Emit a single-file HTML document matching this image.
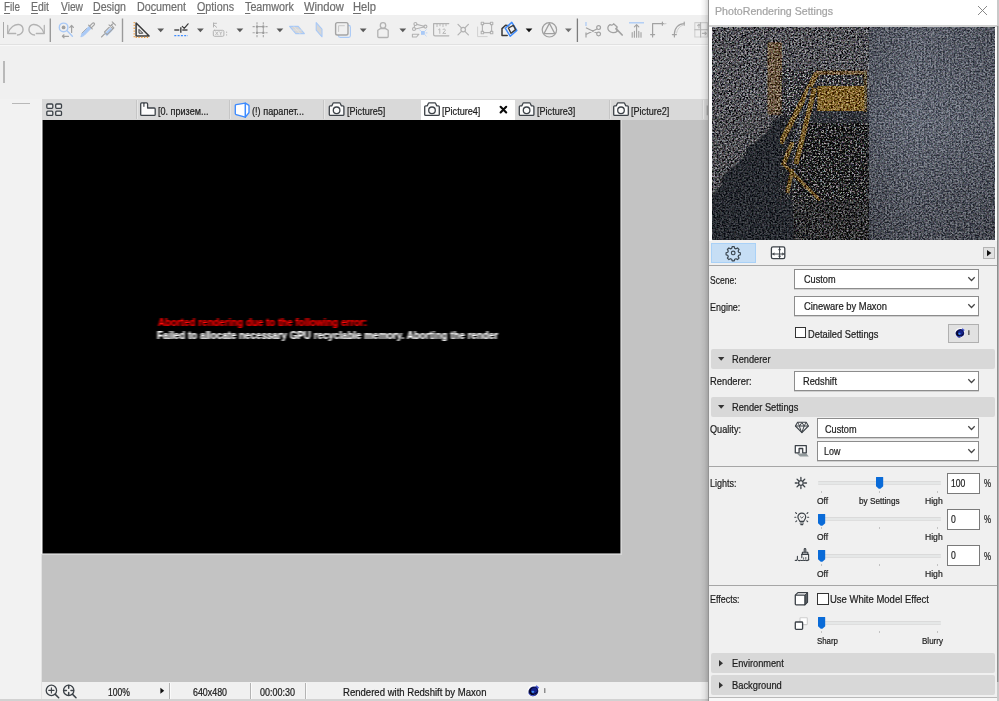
<!DOCTYPE html>
<html>
<head>
<meta charset="utf-8">
<title>PhotoRendering Settings</title>
<style>
html,body{margin:0;padding:0;}
body{width:999px;height:701px;overflow:hidden;background:#f0f0f0;position:relative;font-family:"Liberation Sans",sans-serif;font-size:11px;color:#1a1a1a;}
.a{position:absolute;}
.t{position:absolute;white-space:nowrap;line-height:14px;transform-origin:0 0;-webkit-text-stroke:0.22px currentColor;}
.t u{text-decoration:underline;text-underline-offset:1.5px;text-decoration-thickness:1px;}
svg{position:absolute;overflow:visible;}
.dd{position:absolute;background:#fff;border:1px solid #8c8c8c;box-sizing:border-box;height:20px;box-shadow:0 1px 0 #cfcfcf;}
.hdr{position:absolute;left:711px;width:284px;height:20px;background:#d8d8d8;border-radius:2px;}
.num{position:absolute;left:947px;background:#fff;border:1px solid #7a7a7a;box-sizing:border-box;width:33px;height:21px;}
.track{position:absolute;left:818px;width:123px;height:4px;background:#e5e7e7;border-top:1px solid #dadada;border-bottom:1px solid #dedede;box-sizing:border-box;border-radius:1px;}
.tick{position:absolute;width:1px;height:2px;background:#c2c2c2;}
.cb{position:absolute;width:11px;height:11px;border:1px solid #333;background:#fff;box-sizing:border-box;}
.vs{position:absolute;width:1px;background:#9c9c9c;}
</style>
</head>

<body>
<div class="a" style="left:0;top:0;width:708px;height:15px;background:#fff;"></div>
<span class="t" style="left:4.0px;top:-0.16px;font-size:12px;color:#6e6e6e;font-weight:normal;transform:scaleX(0.8265);"><u>F</u>ile</span>
<span class="t" style="left:31.0px;top:-0.16px;font-size:12px;color:#6e6e6e;font-weight:normal;transform:scaleX(0.8694);"><u>E</u>dit</span>
<span class="t" style="left:60.7px;top:-0.16px;font-size:12px;color:#6e6e6e;font-weight:normal;transform:scaleX(0.8523);"><u>V</u>iew</span>
<span class="t" style="left:93.0px;top:-0.16px;font-size:12px;color:#6e6e6e;font-weight:normal;transform:scaleX(0.8833);"><u>D</u>esign</span>
<span class="t" style="left:137.0px;top:-0.16px;font-size:12px;color:#6e6e6e;font-weight:normal;transform:scaleX(0.8957);">Do<u>c</u>ument</span>
<span class="t" style="left:196.7px;top:-0.16px;font-size:12px;color:#6e6e6e;font-weight:normal;transform:scaleX(0.8943);"><u>O</u>ptions</span>
<span class="t" style="left:244.7px;top:-0.16px;font-size:12px;color:#6e6e6e;font-weight:normal;transform:scaleX(0.8960);"><u>T</u>eamwork</span>
<span class="t" style="left:303.7px;top:-0.16px;font-size:12px;color:#6e6e6e;font-weight:normal;transform:scaleX(0.9370);"><u>W</u>indow</span>
<span class="t" style="left:353.0px;top:-0.16px;font-size:12px;color:#6e6e6e;font-weight:normal;transform:scaleX(0.9316);"><u>H</u>elp</span>
<div class="a" style="left:0;top:44px;width:708px;height:1px;background:#e1e1e1;"></div>
<div class="a" style="left:0;top:45px;width:708px;height:1px;background:#f8f8f8;"></div>
<svg style="left:0;top:0" width="708" height="50" viewBox="0 0 708 50" fill="none" stroke-linecap="round" stroke-linejoin="round">
<path d="M3.5 22v16" stroke="#a8a8a8" stroke-width="1" stroke-linecap="butt"/>
<!-- undo / redo -->
<g stroke="#b2b2b2" stroke-width="1.3">
<path d="M7.7 25.5v8h8"/><path d="M8 33.2C10 27.500 14.600 24.200 18.600 24.500C23.400 25 24.400 31 21.200 33.600C20.200 34.500 18.800 35 17.400 35"/>
<path d="M44.3 25.5v8h-8"/><path d="M44 33.2C42 27.500 37.400 24.200 33.400 24.500C28.600 25 27.600 31 30.800 33.600C31.800 34.500 33.200 35 34.600 35"/>
</g>
<path d="M50.3 18.5v23.5" stroke="#9a9a9a" stroke-width="1.4" stroke-linecap="butt"/>
<!-- find & select -->
<circle cx="63.6" cy="27.4" r="4.3" stroke="#a9c9f6" stroke-width="1.4"/>
<circle cx="63.6" cy="27.4" r="1.9" fill="#a0a0a0"/>
<path d="M66.8 30.6l5.6 5.6" stroke="#a9c9f6" stroke-width="1.4"/>
<path d="M71.6 26v6.5M69.8 27.3l1.8-1.8l1.8 1.8" stroke="#a2a2a2" stroke-width="1.2"/>
<path d="M62.5 36.3h6M64 34.8l-1.6 1.5l1.6 1.5" stroke="#a2a2a2" stroke-width="1.2"/>
<!-- eyedropper -->
<path d="M81 36.5l1.2-3.2l7.2-7.2l2 2l-7.2 7.2z" fill="#a9c9f6" stroke="#a9c9f6" stroke-width="1"/>
<path d="M88.6 25.2l3.6 3.6M89.6 26.2l3-3c1-1 2.6 0.6 1.6 1.6l-3 3" stroke="#a2a2a2" stroke-width="1.2"/>
<path d="M86.5 28.5l-4.5 4.5" stroke="#a2a2a2" stroke-width="0.8"/>
<!-- syringe -->
<path d="M105 33.5l5.5-5.5l2 2l-5.5 5.5z" fill="#a9c9f6" stroke="#a9c9f6" stroke-width="0.8"/>
<path d="M101.5 37l3-3M104.5 32l6.8-6.8l2.6 2.6l-6.8 6.8zM111 25.5l2.5-2.5M112.2 21.8l3.4 3.4M109 24.8l4 4" stroke="#a2a2a2" stroke-width="1.1"/>
<path d="M122.5 18.5v23.5" stroke="#9a9a9a" stroke-width="1.4" stroke-linecap="butt"/>
<!-- set square -->
<path d="M136.100 23v13h13z" stroke="#3a3a3a" stroke-width="1.5"/>
<path d="M139 29.800v3.400h3.400z" stroke="#3a3a3a" stroke-width="1"/>
<path d="M134.2 22v15.4h15.4" stroke="#f39a35" stroke-width="1.2" stroke-dasharray="1.3 1.5" stroke-linecap="butt"/>
<path d="M157.3 28.4h6.8l-3.4 3.8z" fill="#5a5a5a"/>
<!-- snap -->
<path d="M174.3 30h5M182.3 30h5.2" stroke="#4a4a4a" stroke-width="1.3" stroke-linecap="butt"/>
<path d="M180.8 27.3v5.4" stroke="#4a4a4a" stroke-width="1.5" stroke-linecap="butt"/>
<path d="M182.3 26.4l1.9 2l3.9-4.6" stroke="#3a3a3a" stroke-width="1.2"/>
<path d="M174.3 35.6h13.6" stroke="#3d8bff" stroke-width="1.1" stroke-dasharray="2 1.3" stroke-linecap="butt"/>
<path d="M197 28.4h6.8l-3.4 3.8z" fill="#5a5a5a"/>
<!-- XY -->
<g stroke="#b2b2b2" stroke-width="1">
<rect x="213.3" y="30.3" width="10.6" height="6" rx="1.2"/>
<path d="M213.5 23v4M213.5 23.3h3M214 25l2.6 2.3"/>
<path d="M215.6 31.8l2.4 3M218 31.8l-2.4 3M219.6 31.8l1.1 1.5l1.1-1.5M220.7 33.3v1.6" stroke-width="0.8"/>
<path d="M226.6 32v0.2M226.6 34.8v0.2" stroke-width="1.2"/>
</g>
<path d="M236.5 28.4h6.8l-3.4 3.8z" fill="#5a5a5a"/>
<!-- grid -->
<g stroke="#a6a6a6" stroke-width="1.1" stroke-linecap="butt">
<path d="M257 22.2v15M263.3 22.2v15M252.6 26.6h15M252.6 32.8h15" stroke-dasharray="2.2 1 8.6 1 2.2 0"/>
<rect x="256" y="25.6" width="2" height="2" fill="#9a9a9a" stroke="none"/><rect x="262.3" y="25.6" width="2" height="2" fill="#9a9a9a" stroke="none"/>
<rect x="256" y="31.8" width="2" height="2" fill="#9a9a9a" stroke="none"/><rect x="262.3" y="31.8" width="2" height="2" fill="#9a9a9a" stroke="none"/>
</g>
<path d="M276.5 28.4h6.8l-3.4 3.8z" fill="#5a5a5a"/>
<!-- planes -->
<path d="M289.6 26.4h8.6l6.2 7.2h-8.6z" fill="#d6d6d6" stroke="#a9c9f6" stroke-width="1.1"/>
<path d="M293.5 30h8.5M294 26.6l6 7" stroke="#e6e6e6" stroke-width="0.7"/>
<path d="M316.2 22.6l5.8 6.6v7.6l-5.8-6.6z" fill="#d6d6d6" stroke="#a9c9f6" stroke-width="1.1"/>
<!-- rect -->
<rect x="338.4" y="25.4" width="12" height="12" rx="1.8" stroke="#a9c9f6" stroke-width="1.1"/>
<rect x="335.6" y="22.6" width="12.4" height="12.4" rx="1.8" fill="#f0f0f0" stroke="#a4a4a4" stroke-width="1.4"/>
<path d="M338.6 31.5v-5.8h5.8" stroke="#c4c4c4" stroke-width="0.9"/>
<path d="M359.8 28.4h6.8l-3.4 3.8z" fill="#5a5a5a"/>
<!-- weight -->
<g stroke="#b2b2b2" stroke-width="1.3">
<circle cx="383" cy="25.4" r="2.7"/>
<path d="M380.4 28.6h5.2l2.6 1.6v6.3c0 0.6-0.4 1-1 1h-8.4c-0.6 0-1-0.4-1-1v-6.3z"/>
</g>
<path d="M399.4 28.4h6.8l-3.4 3.8z" fill="#5a5a5a"/>
<!-- nodes -->
<g stroke="#b2b2b2" stroke-width="1.1">
<circle cx="415.4" cy="24" r="1.5"/><circle cx="425.4" cy="26.6" r="1.5"/><circle cx="414" cy="29" r="1.5"/>
<path d="M416.8 24.4l7.2 1.8M415.4 29l8.6-2M414.6 25.4l-0.4 2.2"/>
<path d="M412.4 34.2h6.5l-2.4 2.8h-4.1z" />
</g>
<rect x="421" y="31" width="3.8" height="3.8" fill="#a9c9f6"/>
<path d="M419.6 29.8l0.8 0.8M426.2 29.8l-0.8 0.8M426.2 36l-0.8-0.8M427 32.9h-1" stroke="#a9c9f6" stroke-width="0.8"/>
<!-- ruler -->
<g stroke="#b2b2b2" stroke-width="1.2">
<path d="M433.6 24v10.4c0 0.8 0.6 1.4 1.4 1.4h13.8M433.6 23.6h15.2"/>
<path d="M437 24v2.6M440 24v1.8M443 24v2.6M446 24v1.8" stroke-width="0.9"/>
<path d="M438.6 29.6l1.2-0.8v4.6M442.8 29.6c0.8-1.2 3-0.6 2.4 1c-0.4 1-2 1.6-2.4 2.8h2.8" stroke-width="0.9"/>
</g>
<!-- x icon -->
<g stroke="#b2b2b2" stroke-width="1.2"><path d="M458 24.4l10.4 10.4M468.4 24.4l-10.4 10.4"/><circle cx="463.2" cy="29.6" r="2.3" fill="#f0f0f0"/></g>
<!-- group -->
<g stroke="#b2b2b2" stroke-width="1.1">
<rect x="482.4" y="23.4" width="9.2" height="9.2"/>
<rect x="481.2" y="22.2" width="2.4" height="2.4" fill="#f0f0f0"/><rect x="490.4" y="22.2" width="2.4" height="2.4" fill="#f0f0f0"/>
<rect x="481.2" y="31.4" width="2.4" height="2.4" fill="#f0f0f0"/><rect x="490.4" y="31.4" width="2.4" height="2.4" fill="#f0f0f0"/>
</g>
<path d="M477.6 27v9.6h9.6" stroke="#d0d0d0" stroke-width="1"/>
<!-- trace (active) -->
<path d="M502 35.6v-7l3.6-3.4l3 0.6M502 35.6h5.2" stroke="#3a3a3a" stroke-width="1.5"/>
<path d="M511.8 22.4l5 8l-6.6 5.8l-5-8z" stroke="#3d8bff" stroke-width="1.5"/>
<path d="M508.4 28l5-2.6l2.2 4.2l-4.6 3.6z" stroke="#3a3a3a" stroke-width="1.4"/>
<path d="M525.6 28.4h6.8l-3.4 3.8z" fill="#111"/>
<!-- circle triangle -->
<g stroke="#a0a0a0" stroke-width="1.2"><circle cx="549.4" cy="29.8" r="7.2"/><path d="M549.4 23.4l5.4 10.2h-10.8z"/></g>
<path d="M565 28.4h6.8l-3.4 3.8z" fill="#707070"/>
<path d="M577.4 18.5v23.5" stroke="#7c7c7c" stroke-width="1.3" stroke-linecap="butt"/>
<!-- scissors -->
<path d="M586 22v4" stroke="#a9c9f6" stroke-width="1.2" stroke-linecap="butt"/>
<g stroke="#a2a2a2" stroke-width="1.2"><path d="M586 32.6v5" stroke-linecap="butt"/><path d="M586.4 28l10 4.8M586.4 34.2l10-5"/><circle cx="598.6" cy="27.6" r="1.9"/><circle cx="598.6" cy="34" r="1.9"/></g>
<!-- axe -->
<g stroke="#a2a2a2" stroke-width="1.3"><path d="M610 24.6c1.2 1 2.8 0.6 3.6-0.8l3.6 3.2c-1.2 1.6-1 3 0.2 4c-2.6 2.6-6.6 2-8.6-0.4c-1.6-2-1.2-4.6 1.2-6z"/><path d="M616 28.6l6.2 6.4" stroke-width="1.7"/></g>
<!-- adjust -->
<path d="M629 22.8h15" stroke="#a9c9f6" stroke-width="1.3" stroke-linecap="butt"/>
<g stroke="#a2a2a2" stroke-width="1.1"><path d="M636.6 24.6v12.6M634.4 26.8l2.2-2.2l2.2 2.2M632.2 32.6v4.6M634.4 31.4v5.8M638.8 31.4v5.8M641 32.6v4.6"/></g>
<!-- fillet -->
<g stroke="#a2a2a2" stroke-width="1.2"><path d="M652.6 37v-13.4h11.6M662.4 22v3.2M650.6 34.6h4"/><path d="M664.2 23.6h1.8" stroke="#cfcfcf"/></g>
<!-- curve -->
<g stroke="#a2a2a2" stroke-width="1.2"><path d="M674.4 37v-3c0-6 4-10.4 10-10.4M684.2 22v3.2M672.4 34.6h4"/><path d="M676.6 33c0.6-4 3-7 6.6-8" stroke="#c8c8c8" stroke-width="0.9"/></g>
<!-- resize -->
<g stroke="#cfcfcf" stroke-width="1.1"><rect x="694.8" y="22.6" width="12.6" height="14.4"/><path d="M694.8 29.8h12.6M700.6 22.6v14.4M699 24.4v3.6M697.6 25.6l1.4-1.4l1.4 1.4M702.4 33.4h4M705 32l1.4 1.4l-1.4 1.4" stroke="#b4b4b4"/></g>
</svg>
<div class="a" style="left:3px;top:61px;width:2px;height:22px;background:#b9b9b9;"></div>
<div class="a" style="left:42px;top:99px;width:666px;height:21px;background:#d9d9d9;"></div>
<div class="a" style="left:421px;top:100px;width:94px;height:20px;background:#ffffff;"></div>
<div class="a" style="left:136px;top:100px;width:1px;height:19px;background:#c6c6c6;"></div>
<div class="a" style="left:137px;top:100px;width:1px;height:19px;background:#e6e6e6;"></div>
<div class="a" style="left:229px;top:100px;width:1px;height:19px;background:#c6c6c6;"></div>
<div class="a" style="left:230px;top:100px;width:1px;height:19px;background:#e6e6e6;"></div>
<div class="a" style="left:323px;top:100px;width:1px;height:19px;background:#c6c6c6;"></div>
<div class="a" style="left:324px;top:100px;width:1px;height:19px;background:#e6e6e6;"></div>
<div class="a" style="left:609px;top:100px;width:1px;height:19px;background:#c6c6c6;"></div>
<div class="a" style="left:610px;top:100px;width:1px;height:19px;background:#e6e6e6;"></div>
<span class="t" style="left:158.2px;top:103.59px;font-size:11px;color:#1c1c1c;font-weight:normal;transform:scaleX(0.8241);">[0. призем...</span>
<span class="t" style="left:251.7px;top:103.59px;font-size:11px;color:#1c1c1c;font-weight:normal;transform:scaleX(0.8326);">(!) парапет...</span>
<span class="t" style="left:346.7px;top:103.59px;font-size:11px;color:#1c1c1c;font-weight:normal;transform:scaleX(0.8264);">[Picture5]</span>
<span class="t" style="left:441.9px;top:103.59px;font-size:11px;color:#1c1c1c;font-weight:normal;transform:scaleX(0.8264);">[Picture4]</span>
<span class="t" style="left:536.7px;top:103.59px;font-size:11px;color:#1c1c1c;font-weight:normal;transform:scaleX(0.8264);">[Picture3]</span>
<span class="t" style="left:631.3000000000001px;top:103.59px;font-size:11px;color:#1c1c1c;font-weight:normal;transform:scaleX(0.8264);">[Picture2]</span>
<div class="a" style="left:0;top:99px;width:42px;height:600px;background:#f2f2f2;"></div>
<div class="a" style="left:12px;top:103px;width:18px;height:1px;background:#b8b8b8;"></div>
<div class="a" style="left:42px;top:120px;width:666px;height:562px;background:#c3c3c3;"></div>
<div class="a" style="left:42px;top:120px;width:580px;height:435px;background:#d8d8d8;"></div>
<div class="a" style="left:41px;top:120px;width:1px;height:434px;background:#fbfbfb;"></div>
<div class="a" style="left:41px;top:554px;width:1px;height:145px;background:#e2e2e2;"></div>
<svg style="left:0;top:0" width="708" height="701" viewBox="0 0 708 701"><rect x="42.600" y="120" width="577.800" height="433.400" fill="#000"/></svg>
<svg width="0" height="0"><defs><filter id="hb" x="-5%" y="-50%" width="110%" height="200%"><feGaussianBlur stdDeviation="0.95 0.3"/></filter></defs></svg>
<span class="t" style="left:157.7px;top:315.06px;font-size:10.5px;color:#ff0808;font-weight:bold;transform:scaleX(0.9306);filter:url(#hb);">Aborted rendering due to the following error:</span>
<span class="t" style="left:157.0px;top:327.66px;font-size:10.5px;color:#ffffff;font-weight:bold;transform:scaleX(0.9320);filter:url(#hb);">Failed to allocate necessary GPU recyclable memory. Aborting the render</span>
<div class="a" style="left:42px;top:682px;width:666px;height:17px;background:#f0f0f0;"></div>
<div class="a" style="left:0;top:699px;width:708px;height:2px;background:#d2d2d2;"></div>
<div class="a" style="left:169px;top:683px;width:1px;height:16px;background:#b4b4b4;"></div>
<div class="a" style="left:170px;top:683px;width:1px;height:16px;background:#fafafa;"></div>
<div class="a" style="left:250px;top:683px;width:1px;height:16px;background:#b4b4b4;"></div>
<div class="a" style="left:251px;top:683px;width:1px;height:16px;background:#fafafa;"></div>
<div class="a" style="left:305px;top:683px;width:1px;height:16px;background:#b4b4b4;"></div>
<div class="a" style="left:306px;top:683px;width:1px;height:16px;background:#fafafa;"></div>
<span class="t" style="left:107.7px;top:684.66px;font-size:10.5px;color:#1a1a1a;font-weight:normal;transform:scaleX(0.8191);">100%</span>
<span class="t" style="left:192.7px;top:684.66px;font-size:10.5px;color:#1a1a1a;font-weight:normal;transform:scaleX(0.8437);">640x480</span>
<span class="t" style="left:259.7px;top:684.66px;font-size:10.5px;color:#1a1a1a;font-weight:normal;transform:scaleX(0.8563);">00:00:30</span>
<span class="t" style="left:343.0px;top:684.66px;font-size:10.5px;color:#1a1a1a;font-weight:normal;transform:scaleX(0.9106);">Rendered with Redshift by Maxon</span>
<span class="t" style="left:544.2px;top:684.03px;font-size:8px;color:#555;font-weight:normal;transform:scaleX(0.8982);">i</span>
<div class="a" style="left:700px;top:0;width:8px;height:701px;background:linear-gradient(90deg,rgba(0,0,0,0),rgba(0,0,0,.05) 55%,rgba(0,0,0,.16));"></div>
<div class="a" style="left:708px;top:0;width:291px;height:701px;background:#f0f0f0;"></div>
<div class="a" style="left:708px;top:0;width:1px;height:701px;background:#939393;"></div>
<div class="a" style="left:709px;top:0;width:290px;height:25px;background:#fff;"></div>
<div class="a" style="left:709px;top:25px;width:288px;height:2px;background:#d0d0d0;"></div>
<div class="a" style="left:997px;top:0;width:2px;height:701px;background:#c9c9c9;"></div>
<div class="a" style="left:997px;top:26px;width:1px;height:656px;background:#8e8e8e;"></div>
<div class="a" style="left:998px;top:26px;width:1px;height:656px;background:#b2b2b2;"></div>
<span class="t" style="left:714.5px;top:3.62px;font-size:11.5px;color:#a3a3a3;font-weight:normal;transform:scaleX(0.9228);">PhotoRendering Settings</span>
<svg style="left:978px;top:6px" width="9" height="9" viewBox="0 0 9 9"><path d="M0 0L9 9M9 0L0 9" stroke="#7c7c7c" stroke-width="0.9" fill="none"/></svg>
<div class="a" id="pv" style="left:712px;top:27px;width:283px;height:213px;background:#4c4f55;"></div>
<svg style="left:712px;top:27px" width="283" height="213" viewBox="0 0 283 213">
<defs>
<filter id="nzA" x="0" y="0" width="100%" height="100%" color-interpolation-filters="sRGB">
<feTurbulence type="fractalNoise" baseFrequency="0.57 0.61" numOctaves="2" seed="7" result="n"/>
<feColorMatrix in="n" type="matrix" values="1.5 1.25 1.25 0 -1.5  1.25 1.5 1.25 0 -1.5  1.25 1.25 1.5 0 -1.5  0 0 0 0 1" result="g"/>
<feComposite in="SourceGraphic" in2="g" operator="arithmetic" k1="0" k2="1" k3="0.64" k4="-0.32"/>
</filter>
<filter id="nzB" x="0" y="0" width="100%" height="100%" color-interpolation-filters="sRGB">
<feTurbulence type="fractalNoise" baseFrequency="0.57 0.61" numOctaves="2" seed="11" result="n"/>
<feColorMatrix in="n" type="matrix" values="1.5 1.25 1.25 0 -1.5  1.25 1.5 1.25 0 -1.5  1.25 1.25 1.5 0 -1.5  0 0 0 0 1" result="g"/>
<feComposite in="SourceGraphic" in2="g" operator="arithmetic" k1="0" k2="1" k3="0.38" k4="-0.19"/>
</filter>
<filter id="nzC" x="0" y="0" width="100%" height="100%" color-interpolation-filters="sRGB">
<feTurbulence type="fractalNoise" baseFrequency="0.57 0.61" numOctaves="2" seed="23" result="n"/>
<feColorMatrix in="n" type="matrix" values="1.5 1.25 1.25 0 -1.5  1.25 1.5 1.25 0 -1.5  1.25 1.25 1.5 0 -1.5  0 0 0 0 1" result="g"/>
<feComposite in="SourceGraphic" in2="g" operator="arithmetic" k1="0" k2="1" k3="0.28" k4="-0.14"/>
</filter>
<linearGradient id="gR" x1="0" y1="0" x2="0" y2="1"><stop offset="0" stop-color="#5a5e69"/><stop offset="0.45" stop-color="#626773"/><stop offset="1" stop-color="#4b4e57"/></linearGradient>
<linearGradient id="gRx" x1="0" y1="0" x2="1" y2="0"><stop offset="0" stop-color="#000" stop-opacity="0.12"/><stop offset="0.35" stop-color="#000" stop-opacity="0"/><stop offset="1" stop-color="#000" stop-opacity="0.1"/></linearGradient>
<clipPath id="cpv"><rect x="0" y="0" width="283" height="213"/></clipPath>
</defs>
<g clip-path="url(#cpv)">
<!-- left grainy part -->
<g filter="url(#nzA)">
<rect x="0" y="0" width="158" height="213" fill="#515156"/>
<rect x="55.5" y="15" width="14.500" height="73" rx="2" fill="#685641"/>
<path d="M101 96H158V213H80L84 140L94 96Z" fill="#2e2e30"/>
</g>
<!-- dark band + stairs : low grain -->
<g filter="url(#nzC)">
<path d="M100 84H158V96H96Z" fill="#373b44"/>
<path d="M0 168L10 158L10 150L22 140L34 128L34 122L48 112L60 100L60 94L74 88L82 92L79 145L82 213H0Z" fill="#272a30"/>
</g>
<!-- frame & rails on top -->
<g filter="url(#nzA)">
<rect x="104" y="43.600" width="51" height="4.200" fill="#70593a"/>
<rect x="151.500" y="44" width="3.500" height="41" fill="#5e5238"/>
<rect x="105.300" y="59" width="47" height="25" fill="#7c6029"/>
<path d="M104.800 46L68.500 116.400" stroke="#745b2c" stroke-width="5.500" fill="none"/>
<path d="M102.700 61L84 137" stroke="#765c2b" stroke-width="5" fill="none"/>
<path d="M98.500 60L80.500 118" stroke="#454a55" stroke-width="2" fill="none"/>
<path d="M80.500 115L71 138.400" stroke="#745b2c" stroke-width="4.500" fill="none"/>
<path d="M80.500 142L75.300 166" stroke="#70582a" stroke-width="4" fill="none"/>
<path d="M72 137.500L108 173.500" stroke="#70582a" stroke-width="3.200" fill="none"/>
</g>
<!-- right smooth part -->
<g filter="url(#nzB)">
<rect x="157" y="0" width="126" height="213" fill="url(#gR)"/>
<rect x="157" y="0" width="126" height="213" fill="url(#gRx)"/>
</g>
</g>
</svg>
<div class="a" style="left:709px;top:27px;width:3px;height:214px;background:#fdfdfd;"></div>
<div class="a" style="left:995px;top:27px;width:2px;height:214px;background:#fafafa;"></div>
<div class="a" style="left:711px;top:243px;width:45px;height:20px;background:#c6def5;border:1px solid #a9d1f7;box-sizing:border-box;"></div>
<div class="a" style="left:983px;top:247px;width:12px;height:12px;background:#e1e1e1;border:1px solid #b4b4b4;box-sizing:border-box;"></div>
<svg style="left:987.2px;top:249.8px" width="4.4" height="6.2" viewBox="0 0 44 62"><path d="M0 0L44 31L0 62Z" fill="#111"/></svg>
<div class="a" style="left:709px;top:265px;width:288px;height:1px;background:#a6a6a6;"></div>
<span class="t" style="left:710.4000000000001px;top:272.69px;font-size:11px;color:#1c1c1c;font-weight:normal;transform:scaleX(0.7766);">Scene:</span>
<div class="dd" style="left:794px;top:269px;width:185px;"></div>
<span class="t" style="left:803.7px;top:271.99px;font-size:11px;color:#1c1c1c;font-weight:normal;transform:scaleX(0.8336);">Custom</span>
<svg style="left:968px;top:277.3px" width="7" height="4" viewBox="0 0 7 4"><path d="M0.3 0.3L3.5 3.5L6.7 0.3" stroke="#444" stroke-width="1.25" fill="none"/></svg>
<span class="t" style="left:709.7px;top:299.69px;font-size:11px;color:#1c1c1c;font-weight:normal;transform:scaleX(0.8121);">Engine:</span>
<div class="dd" style="left:794px;top:296px;width:185px;"></div>
<span class="t" style="left:803.7px;top:298.99px;font-size:11px;color:#1c1c1c;font-weight:normal;transform:scaleX(0.8537);">Cineware by Maxon</span>
<svg style="left:968px;top:304.3px" width="7" height="4" viewBox="0 0 7 4"><path d="M0.3 0.3L3.5 3.5L6.7 0.3" stroke="#444" stroke-width="1.25" fill="none"/></svg>
<div class="cb" style="left:795px;top:327px;"></div>
<span class="t" style="left:807.6px;top:326.79px;font-size:11px;color:#1c1c1c;font-weight:normal;transform:scaleX(0.8464);">Detailed Settings</span>
<div class="a" style="left:948px;top:324px;width:31px;height:19px;background:#e1e1e1;border:1px solid #b0b0b0;box-sizing:border-box;"></div>
<span class="t" style="left:968.3000000000001px;top:326.13px;font-size:8px;color:#2a2a2a;font-weight:bold;transform:scaleX(0.7608);">i</span>
<div class="hdr" style="top:349px;"></div>
<svg style="left:718px;top:356.6px" width="6.4" height="3.8" viewBox="0 0 64 38"><path d="M0 0H64L32 38Z" fill="#333"/></svg>
<span class="t" style="left:731.5px;top:351.89px;font-size:11px;color:#1c1c1c;font-weight:normal;transform:scaleX(0.8395);">Renderer</span>
<span class="t" style="left:709.7px;top:374.19px;font-size:11px;color:#1c1c1c;font-weight:normal;transform:scaleX(0.8503);">Renderer:</span>
<div class="dd" style="left:794px;top:371px;width:185px;"></div>
<span class="t" style="left:803.0px;top:373.99px;font-size:11px;color:#1c1c1c;font-weight:normal;transform:scaleX(0.8424);">Redshift</span>
<svg style="left:968px;top:379.3px" width="7" height="4" viewBox="0 0 7 4"><path d="M0.3 0.3L3.5 3.5L6.7 0.3" stroke="#444" stroke-width="1.25" fill="none"/></svg>
<div class="hdr" style="top:397px;"></div>
<svg style="left:718px;top:404.6px" width="6.4" height="3.8" viewBox="0 0 64 38"><path d="M0 0H64L32 38Z" fill="#333"/></svg>
<span class="t" style="left:731.5px;top:399.89px;font-size:11px;color:#1c1c1c;font-weight:normal;transform:scaleX(0.8404);">Render Settings</span>
<span class="t" style="left:710.4000000000001px;top:421.99px;font-size:11px;color:#1c1c1c;font-weight:normal;transform:scaleX(0.8312);">Quality:</span>
<div class="dd" style="left:817px;top:418px;width:162px;"></div>
<span class="t" style="left:824.7px;top:421.79px;font-size:11px;color:#1c1c1c;font-weight:normal;transform:scaleX(0.8336);">Custom</span>
<svg style="left:968px;top:426.3px" width="7" height="4" viewBox="0 0 7 4"><path d="M0.3 0.3L3.5 3.5L6.7 0.3" stroke="#444" stroke-width="1.25" fill="none"/></svg>
<div class="dd" style="left:817px;top:441px;width:162px;"></div>
<span class="t" style="left:824.0px;top:443.99px;font-size:11px;color:#1c1c1c;font-weight:normal;transform:scaleX(0.8074);">Low</span>
<svg style="left:968px;top:449.3px" width="7" height="4" viewBox="0 0 7 4"><path d="M0.3 0.3L3.5 3.5L6.7 0.3" stroke="#444" stroke-width="1.25" fill="none"/></svg>
<div class="a" style="left:709px;top:466px;width:288px;height:1px;background:#a6a6a6;"></div>
<span class="t" style="left:709.7px;top:475.99px;font-size:11px;color:#1c1c1c;font-weight:normal;transform:scaleX(0.8204);">Lights:</span>
<div class="track" style="top:481px;"></div>
<svg style="left:875.9px;top:477.3px" width="7.2" height="11.8" viewBox="0 0 7.2 11.8"><path d="M0.3 0H6.9Q7.2 0 7.2 0.3V9.2L4.400 11.800H2.800L0 9.200V0.300Q0 0 0.300 0Z" fill="#0a6bd8"/></svg>
<div class="tick" style="left:821px;top:491px;"></div>
<div class="tick" style="left:879px;top:491px;"></div>
<div class="tick" style="left:937px;top:491px;"></div>
<span class="t" style="left:817.0px;top:494.01px;font-size:9.5px;color:#1c1c1c;font-weight:normal;transform:scaleX(0.8880);">Off</span>
<span class="t" style="left:858.8px;top:494.01px;font-size:9.5px;color:#1c1c1c;font-weight:normal;transform:scaleX(0.8638);">by Settings</span>
<span class="t" style="left:924.6px;top:494.01px;font-size:9.5px;color:#1c1c1c;font-weight:normal;transform:scaleX(0.9055);">High</span>
<div class="num" style="top:472.5px;"></div>
<span class="t" style="left:950.7px;top:475.79px;font-size:11px;color:#1c1c1c;font-weight:normal;transform:scaleX(0.7843);">100</span>
<span class="t" style="left:983.7px;top:476.19px;font-size:11px;color:#1c1c1c;font-weight:normal;transform:scaleX(0.7157);">%</span>
<div class="track" style="top:517.3px;"></div>
<svg style="left:818.4px;top:513.5999999999999px" width="7.2" height="11.8" viewBox="0 0 7.2 11.8"><path d="M0.3 0H6.9Q7.2 0 7.2 0.3V9.2L4.400 11.800H2.800L0 9.200V0.300Q0 0 0.300 0Z" fill="#0a6bd8"/></svg>
<div class="tick" style="left:821px;top:527.3px;"></div>
<div class="tick" style="left:879px;top:527.3px;"></div>
<div class="tick" style="left:937px;top:527.3px;"></div>
<span class="t" style="left:817.0px;top:530.31px;font-size:9.5px;color:#1c1c1c;font-weight:normal;transform:scaleX(0.8880);">Off</span>
<span class="t" style="left:924.6px;top:530.31px;font-size:9.5px;color:#1c1c1c;font-weight:normal;transform:scaleX(0.9055);">High</span>
<div class="num" style="top:508.79999999999995px;"></div>
<span class="t" style="left:950.7px;top:512.09px;font-size:11px;color:#1c1c1c;font-weight:normal;transform:scaleX(0.7837);">0</span>
<span class="t" style="left:983.7px;top:512.49px;font-size:11px;color:#1c1c1c;font-weight:normal;transform:scaleX(0.7157);">%</span>
<div class="track" style="top:553.5px;"></div>
<svg style="left:818.4px;top:549.8px" width="7.2" height="11.8" viewBox="0 0 7.2 11.8"><path d="M0.3 0H6.9Q7.2 0 7.2 0.3V9.2L4.400 11.800H2.800L0 9.200V0.300Q0 0 0.300 0Z" fill="#0a6bd8"/></svg>
<div class="tick" style="left:821px;top:563.5px;"></div>
<div class="tick" style="left:879px;top:563.5px;"></div>
<div class="tick" style="left:937px;top:563.5px;"></div>
<span class="t" style="left:817.0px;top:566.51px;font-size:9.5px;color:#1c1c1c;font-weight:normal;transform:scaleX(0.8880);">Off</span>
<span class="t" style="left:924.6px;top:566.51px;font-size:9.5px;color:#1c1c1c;font-weight:normal;transform:scaleX(0.9055);">High</span>
<div class="num" style="top:545.0px;"></div>
<span class="t" style="left:950.7px;top:548.29px;font-size:11px;color:#1c1c1c;font-weight:normal;transform:scaleX(0.7837);">0</span>
<span class="t" style="left:983.7px;top:548.69px;font-size:11px;color:#1c1c1c;font-weight:normal;transform:scaleX(0.7157);">%</span>
<div class="a" style="left:709px;top:585px;width:288px;height:1px;background:#a6a6a6;"></div>
<span class="t" style="left:709.7px;top:592.49px;font-size:11px;color:#1c1c1c;font-weight:normal;transform:scaleX(0.8113);">Effects:</span>
<div class="cb" style="left:817px;top:593px;width:12px;height:12px;"></div>
<span class="t" style="left:829.8px;top:592.49px;font-size:11px;color:#1c1c1c;font-weight:normal;transform:scaleX(0.8629);">Use White Model Effect</span>
<div class="track" style="top:621px;"></div>
<svg style="left:818.4px;top:617.3px" width="7.2" height="11.8" viewBox="0 0 7.2 11.8"><path d="M0.3 0H6.9Q7.2 0 7.2 0.3V9.2L4.400 11.800H2.800L0 9.200V0.300Q0 0 0.300 0Z" fill="#0a6bd8"/></svg>
<div class="tick" style="left:821px;top:631px;"></div>
<div class="tick" style="left:879px;top:631px;"></div>
<div class="tick" style="left:937px;top:631px;"></div>
<span class="t" style="left:817.0px;top:634.01px;font-size:9.5px;color:#1c1c1c;font-weight:normal;transform:scaleX(0.8281);">Sharp</span>
<span class="t" style="left:921.6px;top:634.01px;font-size:9.5px;color:#1c1c1c;font-weight:normal;transform:scaleX(0.8463);">Blurry</span>
<div class="hdr" style="top:653px;"></div>
<svg style="left:718.8px;top:660.2px" width="4" height="6.4" viewBox="0 0 40 64"><path d="M0 0V64L40 32Z" fill="#333"/></svg>
<span class="t" style="left:731.5px;top:655.89px;font-size:11px;color:#1c1c1c;font-weight:normal;transform:scaleX(0.8387);">Environment</span>
<div class="hdr" style="top:675px;"></div>
<svg style="left:718.8px;top:682.2px" width="4" height="6.4" viewBox="0 0 40 64"><path d="M0 0V64L40 32Z" fill="#333"/></svg>
<span class="t" style="left:731.5px;top:677.89px;font-size:11px;color:#1c1c1c;font-weight:normal;transform:scaleX(0.8481);">Background</span>
<div class="a" style="left:709px;top:697px;width:288px;height:1px;background:#b9b9b9;"></div>
<div class="a" style="left:709px;top:698px;width:288px;height:3px;background:#f7f7f7;"></div>
<svg style="left:0;top:0" width="708" height="125" viewBox="0 0 708 125" fill="none" stroke-linejoin="round" stroke-linecap="round">
<g stroke="#3c4248" stroke-width="1.3" fill="#ececec">
<rect x="46.8" y="104" width="6" height="4.300" rx="1"/><rect x="55.7" y="104" width="5.800" height="4.300" rx="1"/>
<rect x="46.8" y="111.200" width="6" height="4.200" rx="1"/><rect x="55.7" y="111.200" width="5.800" height="4.200" rx="1"/>
</g>
<path d="M140.700 114.400c0 0.600 0.400 1 1 1h12.500c0.600 0 1-0.400 1-1v-5.400c0-0.600-0.400-1-1-1h-6.600v-4.100c0-0.600-0.400-1-1-1h-4.900c-0.600 0-1 0.400-1 1z" fill="#fcfcfc" stroke="#3c4248" stroke-width="1.3"/>
<path d="M143.900 103.300v3" stroke="#3c4248" stroke-width="1.2"/>
<path d="M235.300 105.600c0-0.500 0.300-0.800 0.800-0.900l9.200-1.600l3.300 2c0.300 0.200 0.400 0.400 0.400 0.800v6.400c0 0.300-0.100 0.500-0.300 0.700l-3.400 4.200l-9.200-2.600c-0.500-0.100-0.800-0.500-0.800-1z" fill="#fff" stroke="#3d8bff" stroke-width="1.35"/>
<path d="M245.300 103.200v14" stroke="#3d8bff" stroke-width="1.5"/>
<path d="M329.3 106.800c0-0.600 0.400-1 1-1h1.600l1-2.400c0.100-0.300 0.400-0.600 0.900-0.600h5.600c0.500 0 0.800 0.300 0.900 0.600l1 2.400h1.600c0.600 0 1 0.400 1 1v7.600c0 0.600-0.400 1-1 1h-12.600c-0.600 0-1-0.400-1-1z" fill="#fbfbfb" stroke="#3c4248" stroke-width="1.3"/><circle cx="336.6" cy="110.300" r="3.300" stroke="#3c4248" stroke-width="1.3" fill="none"/><path d="M424.7 106.800c0-0.600 0.400-1 1-1h1.600l1-2.400c0.100-0.300 0.400-0.600 0.900-0.600h5.600c0.500 0 0.800 0.300 0.900 0.600l1 2.400h1.600c0.600 0 1 0.400 1 1v7.600c0 0.600-0.400 1-1 1h-12.600c-0.600 0-1-0.400-1-1z" fill="#fbfbfb" stroke="#3c4248" stroke-width="1.3"/><circle cx="432.0" cy="110.300" r="3.300" stroke="#3c4248" stroke-width="1.3" fill="none"/><path d="M519.3 106.800c0-0.600 0.400-1 1-1h1.600l1-2.400c0.100-0.300 0.400-0.600 0.900-0.600h5.600c0.500 0 0.800 0.300 0.900 0.600l1 2.400h1.600c0.600 0 1 0.400 1 1v7.600c0 0.600-0.400 1-1 1h-12.600c-0.600 0-1-0.400-1-1z" fill="#fbfbfb" stroke="#3c4248" stroke-width="1.3"/><circle cx="526.6" cy="110.300" r="3.300" stroke="#3c4248" stroke-width="1.3" fill="none"/><path d="M613.7 106.800c0-0.600 0.400-1 1-1h1.600l1-2.400c0.100-0.300 0.400-0.600 0.900-0.600h5.600c0.500 0 0.800 0.300 0.900 0.600l1 2.400h1.600c0.600 0 1 0.400 1 1v7.600c0 0.600-0.400 1-1 1h-12.600c-0.600 0-1-0.400-1-1z" fill="#fbfbfb" stroke="#3c4248" stroke-width="1.3"/><circle cx="621.0" cy="110.300" r="3.300" stroke="#3c4248" stroke-width="1.3" fill="none"/>
<path d="M500.600 106.800l5.600 5.600M506.200 106.800l-5.600 5.600" stroke="#0a0a0a" stroke-width="2.1" stroke-linecap="round"/>
<path d="M703.5 100v19" stroke="#e0e0e0" stroke-width="1" stroke-linecap="butt"/><path d="M702.5 100v19" stroke="#cccccc" stroke-width="1" stroke-linecap="butt"/><path d="M707.3 105.500v9.700" stroke="#8f8f8f" stroke-width="1.2" stroke-linecap="butt"/>
</svg>
<svg style="left:0;top:680px" width="708" height="21" viewBox="0 680 708 21" fill="none" stroke-linecap="round" stroke-linejoin="round">
<g stroke="#3c4248" stroke-width="1.3">
<circle cx="51.4" cy="690.4" r="5.2"/><path d="M55.3 694.4l3.4 3.3" stroke-width="1.5"/><path d="M48.8 690.4h5.2M51.4 687.8v5.2" stroke-width="1.1"/>
<circle cx="68.7" cy="690.4" r="5.2"/><path d="M72.6 694.4l3.4 3.3" stroke-width="1.5"/>
<path d="M68.7 685.6v2.6M68.7 692.6v2.6M64 690.4h2.4M71 690.4h2.4" stroke-width="1.5"/>
</g>
<path d="M160.4 687.8v6l3.8-3z" fill="#111"/>
</svg>
<svg style="left:520px;top:680px" width="40" height="21" viewBox="520 680 40 21"><g transform="translate(533.3 690.7) scale(1.0)"><ellipse cx="0" cy="0.2" rx="6" ry="5.9" fill="#fdfdfd" opacity="0.9"/><path d="M3.2 -5.4l2.6 2.2l-2 2.4l-2.8-2.2z" fill="#4b5bd2"/><ellipse cx="-0.3" cy="0.6" rx="5.1" ry="4.7" transform="rotate(-35)" fill="#121a6a"/><ellipse cx="-0.2" cy="0.4" rx="4.2" ry="3.5" transform="rotate(-35)" fill="#06071c"/><ellipse cx="0.6" cy="0.4" rx="3.2" ry="2.9" transform="rotate(-35)" fill="#14208a"/><ellipse cx="-0.4" cy="1.1" rx="1.4" ry="1.1" fill="#3f8cf0"/><path d="M-4.6 2.6c1.2 2.2 4 3 6.6 1.6" stroke="#5a66e0" stroke-width="0.9" fill="none"/></g></svg>
<svg style="left:948px;top:324px" width="31" height="19" viewBox="948 324 31 19"><g transform="translate(959.8 332.8) scale(0.84)"><ellipse cx="0" cy="0.2" rx="6" ry="5.9" fill="#fdfdfd" opacity="0.9"/><path d="M3.2 -5.4l2.6 2.2l-2 2.4l-2.8-2.2z" fill="#4b5bd2"/><ellipse cx="-0.3" cy="0.6" rx="5.1" ry="4.7" transform="rotate(-35)" fill="#121a6a"/><ellipse cx="-0.2" cy="0.4" rx="4.2" ry="3.5" transform="rotate(-35)" fill="#06071c"/><ellipse cx="0.6" cy="0.4" rx="3.2" ry="2.9" transform="rotate(-35)" fill="#14208a"/><ellipse cx="-0.4" cy="1.1" rx="1.4" ry="1.1" fill="#3f8cf0"/><path d="M-4.6 2.6c1.2 2.2 4 3 6.6 1.6" stroke="#5a66e0" stroke-width="0.9" fill="none"/></g></svg>
<svg style="left:708px;top:240px" width="291" height="461" viewBox="708 240 291 461" fill="none" stroke-linecap="round" stroke-linejoin="round">
<!-- gear -->
<g transform="translate(733.2 252.9) scale(0.88)" stroke="#3a4650" stroke-width="1.35">
<path d="M-1.2 -7.1h2.4l0.5 1.9l1.5 0.6l1.7-1l1.7 1.7l-1 1.7l0.6 1.5l1.9 0.5v2.4l-1.9 0.5l-0.6 1.5l1 1.7l-1.7 1.7l-1.7-1l-1.5 0.6l-0.5 1.9h-2.4l-0.5-1.9l-1.5-0.6l-1.7 1l-1.7-1.7l1-1.7l-0.6-1.5l-1.9-0.5v-2.4l1.9-0.5l0.6-1.5l-1-1.7l1.7-1.7l1.7 1l1.5-0.6z"/>
<circle cx="0" cy="0" r="2.1"/>
</g>
<!-- layout -->
<rect x="771.4" y="246.8" width="13.4" height="11.8" rx="1.6" fill="#fff" stroke="#3c4248" stroke-width="1.3"/>
<path d="M779.6 247v11.4M771.6 254h13" stroke="#3c4248" stroke-width="1"/>
<path d="M778.6 249.6l1-1.2l1 1.2zM778.6 256.2l1 1.2l1-1.2zM774 253l-1.2 1l1.2 1zM782.6 253l1.2 1l-1.2 1z" fill="#3c4248" stroke="#3c4248" stroke-width="0.5"/>
<!-- diamond -->
<g stroke="#3c4248" stroke-width="1.1">
<path d="M797.600 422.300h8.600l2.200 3.700l-6.500 6.700l-6.500-6.700z"/>
<path d="M795.500 426h12.800M799.600 426l2.300-3.500l2.300 3.500l-2.300 6.400z" stroke-width="1"/><path d="M797.800 422.500l1.800 3.500M806 422.500l-1.800 3.500" stroke-width="0.9"/>
</g>
<!-- quality 2 -->
<path d="M796.800 453.400l9.600 0l2.400 3h-8.800z" fill="#929a9c"/>
<path d="M795.300 445.700h11v7.100h-3.600v-4.300h-3.600v4.300h-3.800z" fill="#fff" stroke="#3c4248" stroke-width="1.3"/>
<!-- sun -->
<g stroke="#3c4248" stroke-width="1.3"><circle cx="800.9" cy="483" r="2.3"/>
<path d="M800.9 477.4v2M800.9 486.6v2M795.3 483h2M804.5 483h2M797 479.1l1.4 1.4M803.4 485.500l1.4 1.4M804.8 479.1l-1.4 1.4M798.4 485.5l-1.4 1.4"/></g>
<!-- bulb -->
<g stroke="#3c4248" stroke-width="1.2">
<path d="M799.9 521.4c-0.2-1.2-2-2.200-2-4.400a3.900 3.900 0 0 1 7.800 0c0 2.200-1.800 3.200-2 4.400z"/><path d="M800.2 523h3.200M800.8 524.6h2"/>
<path d="M800.400 516.800l1.400 1.200l1.400-1.200" stroke-width="0.9"/>
<path d="M795.600 512.600l0.900 0.900M807.900 512.600l-0.900 0.900M794.800 517.200h1.100M807.600 517.200h1.100M795.800 521.600l0.900-0.800M807.700 521.600l-0.900-0.800" stroke-width="1.1"/>
</g>
<!-- brush -->
<g stroke="#3c4248" stroke-width="1.1">
<path d="M804.2 552v-2.600c0-1.200 1.600-1.200 1.600 0v2.600"/><path d="M802.400 552.200h5.400v2.200h-5.400z"/>
<path d="M801.800 554.400h6.800v5.400"/><path d="M801.800 554.400v3.400"/>
<path d="M798.400 560.400c1 0.800 1.600-0.600 2.600 0s1.600-0.600 2.600 0s1.600-0.600 2.600 0s1.800-0.200 2.600-0.600"/>
<path d="M795.200 560.200c1.200 0.600 2.200 0 2.200-1.400v-2.400"/>
<path d="M803.600 557.800v1.400M805.800 557.400v1.800" stroke-width="0.8"/>
</g>
<!-- cube -->
<path d="M795.300 595.200l2.600-2.600h9.600v9.400l-2.600 2.800" fill="#fff" stroke="#3c4248" stroke-width="1.2"/>
<path d="M804.900 595.200l2.600-2.600v9.400l-2.600 2.800z" fill="#5a5f64" stroke="#3c4248" stroke-width="1"/>
<rect x="795.300" y="595.200" width="9.600" height="9.600" rx="0.8" fill="#fff" stroke="#3c4248" stroke-width="1.3"/>
<!-- blur -->
<rect x="800" y="617.700" width="7.300" height="6.900" rx="0.6" fill="#fff" stroke="#cdcdcd" stroke-width="1.1"/>
<rect x="795.300" y="622" width="7.300" height="7.400" rx="0.8" fill="#fff" stroke="#3c4248" stroke-width="1.3"/>
</svg>
</body>
</html>
